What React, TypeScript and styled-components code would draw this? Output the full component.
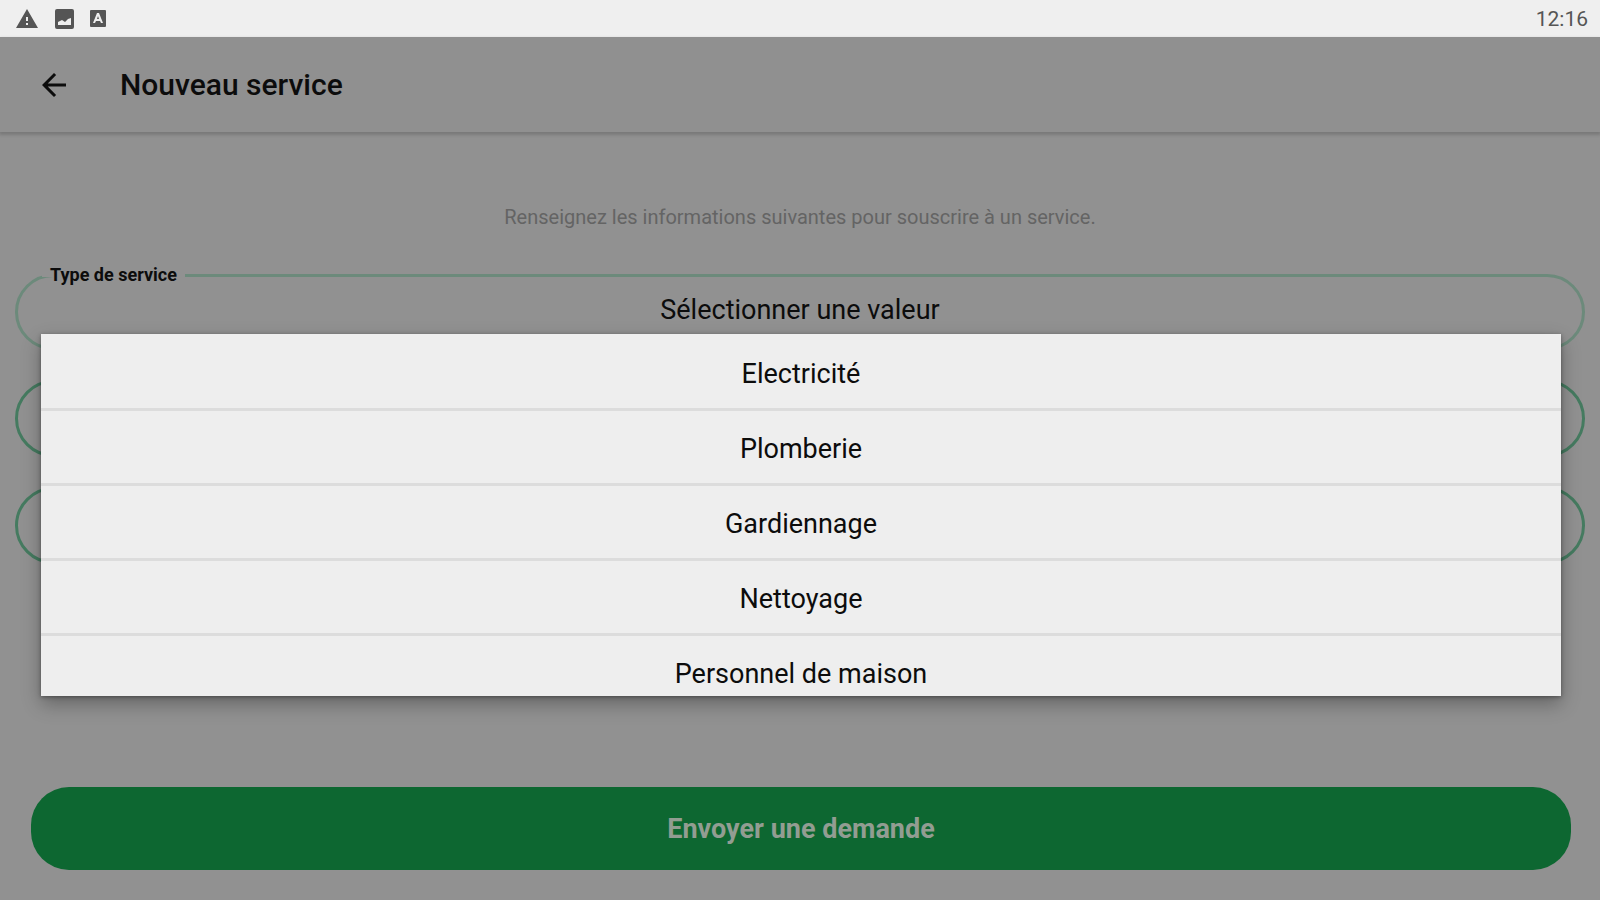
import React, { useState } from "react";
import styled, { createGlobalStyle } from "styled-components";
import { MdArrowBack, MdWarning } from "react-icons/md";

const GlobalStyle = createGlobalStyle`
  *, *::before, *::after { box-sizing: border-box; }
  body {
    margin: 0;
    background: #919191;
    color: #0c0c0c;
    font-family: Roboto, "Liberation Sans", sans-serif;
  }
  button, input { font: inherit; color: inherit; }
`;

const StatusBar = styled.div`
  display: flex;
  align-items: center;
  justify-content: space-between;
  height: 37px;
  padding: 0 12px 0 15px;
  background: #efefef;
  color: #555;
`;

const StatusIcons = styled.div`
  display: flex;
  align-items: center;
  gap: 16px;
`;

const Clock = styled.time`
  font-size: 21px;
  line-height: 24px;
`;

const AppBar = styled.header`
  display: flex;
  align-items: center;
  gap: 48px;
  height: 95px;
  padding: 0 36px;
  background: #909090;
  box-shadow: 0 2px 3px 1px rgba(0, 0, 0, 0.16);
`;

const BackButton = styled.button`
  display: flex;
  padding: 0;
  border: 0;
  background: none;
`;

const Title = styled.h1`
  margin: 0;
  font-size: 30px;
  line-height: 36px;
  font-weight: 500;
`;

const Form = styled.form`
  display: flex;
  flex-direction: column;
  padding: 73px 15px 30px;
`;

const Intro = styled.p`
  margin: 0 0 44px;
  font-size: 20px;
  line-height: 24px;
  text-align: center;
  color: #646464;
`;

const Fields = styled.div`
  position: relative;
  display: flex;
  flex-direction: column;
  gap: 30px;
`;

const Field = styled.fieldset<{ $muted?: boolean }>`
  position: relative;
  height: 77px;
  min-width: 0;
  margin: 0;
  padding: 0 24px;
  border: 3px solid ${(p) => (p.$muted ? "#6c8a7b" : "#457b60")};
  border-radius: 39px;
`;

const Legend = styled.legend`
  height: 4px;
  padding: 0 8px;
  font-size: 18px;
  line-height: 4px;
  font-weight: 700;
`;

const Picker = styled.button`
  display: block;
  width: 100%;
  height: 66px;
  padding: 0;
  border: 0;
  background: none;
  font-size: 27px;
  line-height: 32px;
`;

const TextInput = styled.input`
  display: block;
  width: 100%;
  height: 71px;
  border: 0;
  outline: 0;
  background: none;
  font-size: 27px;
`;

const Menu = styled.ul`
  position: absolute;
  top: 61px;
  left: 26px;
  right: 24px;
  max-height: 362px;
  margin: 0;
  padding: 2px 0 0;
  overflow: hidden;
  list-style: none;
  background: #eee;
  box-shadow: 0 8px 18px rgba(0, 0, 0, 0.3), 0 1px 4px rgba(0, 0, 0, 0.35);
`;

const MenuItem = styled.li`
  border-bottom: 3px solid #dcdcdc;
`;

const Option = styled.button`
  display: block;
  width: 100%;
  height: 72px;
  padding: 4px 0 0;
  border: 0;
  background: none;
  font-size: 27px;
  line-height: 32px;
`;

const Submit = styled.button`
  height: 83px;
  margin: 223px 14px 0 16px;
  border: 0;
  border-radius: 38px;
  background: #0d6731;
  color: #929d92;
  font-size: 27px;
  line-height: 32px;
  font-weight: 700;
`;

const ImageIcon = () => (
  <svg width="19" height="20" viewBox="0 0 19 20" aria-hidden="true">
    <path
      fill="currentColor"
      fillRule="evenodd"
      d="M2 0h15a2 2 0 0 1 2 2v16a2 2 0 0 1-2 2H2a2 2 0 0 1-2-2V2a2 2 0 0 1 2-2zM3 16h13V9l-3 1-3 3-3-2-4 2z"
    />
  </svg>
);

const LetterIcon = () => (
  <svg width="16" height="17" viewBox="0 0 16 17" aria-hidden="true">
    <path
      fill="currentColor"
      fillRule="evenodd"
      d="M1 0h14a1 1 0 0 1 1 1v15a1 1 0 0 1-1 1H1a1 1 0 0 1-1-1V1a1 1 0 0 1 1-1zM7 3 3 13h2l1-2h4l1 2h2L9 3zM8 6l1 3H7z"
    />
  </svg>
);

const services = ["Electricité", "Plomberie", "Gardiennage", "Nettoyage", "Personnel de maison"];

export default function App() {
  const [open, setOpen] = useState(true);
  const [service, setService] = useState("Sélectionner une valeur");

  return (
    <>
      <GlobalStyle />
      <StatusBar>
        <StatusIcons>
          <MdWarning size={24} />
          <ImageIcon />
          <LetterIcon />
        </StatusIcons>
        <Clock>12:16</Clock>
      </StatusBar>
      <AppBar>
        <BackButton type="button" aria-label="Retour">
          <MdArrowBack size={36} />
        </BackButton>
        <Title>Nouveau service</Title>
      </AppBar>
      <Form onSubmit={(e) => e.preventDefault()}>
        <Intro>Renseignez les informations suivantes pour souscrire à un service.</Intro>
        <Fields>
          <Field $muted>
            <Legend id="service-label">Type de service</Legend>
            <Picker
              type="button"
              aria-expanded={open}
              aria-labelledby="service-label"
              onClick={() => setOpen(!open)}
            >
              {service}
            </Picker>
          </Field>
          <Field>
            <TextInput type="text" aria-label="Adresse" />
          </Field>
          <Field>
            <TextInput type="text" aria-label="Description" />
          </Field>
          {open && (
            <Menu aria-labelledby="service-label">
              {services.map((name) => (
                <MenuItem key={name}>
                  <Option
                    type="button"
                    onClick={() => {
                      setService(name);
                      setOpen(false);
                    }}
                  >
                    {name}
                  </Option>
                </MenuItem>
              ))}
            </Menu>
          )}
        </Fields>
        <Submit type="submit">Envoyer une demande</Submit>
      </Form>
    </>
  );
}
